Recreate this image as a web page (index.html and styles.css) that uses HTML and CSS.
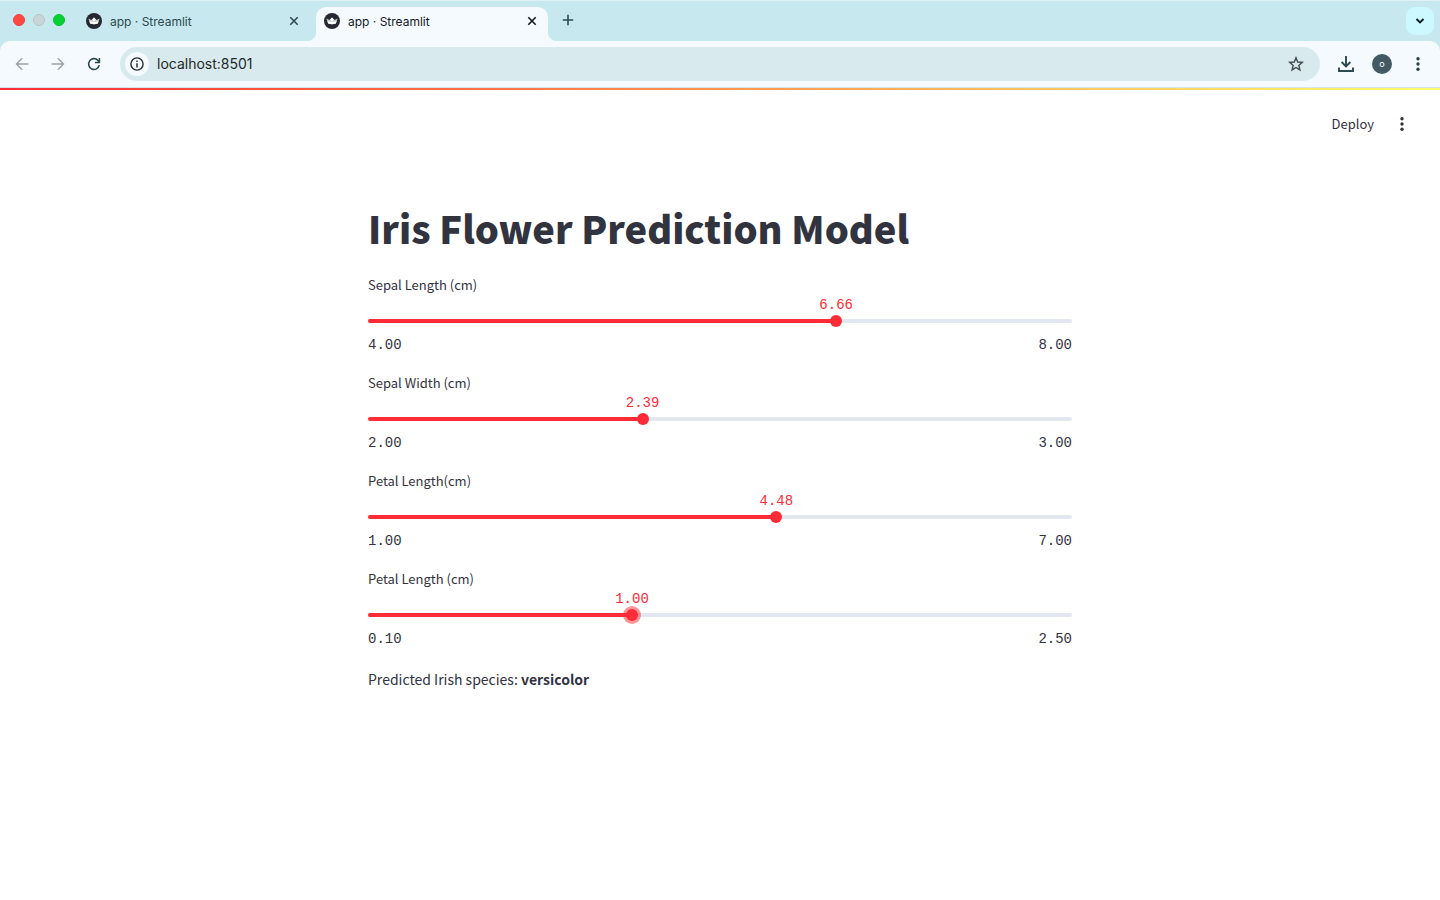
FILE: index.html
```
<!DOCTYPE html>
<html lang="en">
<head>
<meta charset="utf-8">
<title>app · Streamlit</title>
<link rel="stylesheet" href="styles.css">
</head>
<body>
<svg class="defs" aria-hidden="true">
  <symbol id="crown" viewBox="0 0 16 16"><circle cx="8" cy="8" r="8" fill="#262730"/><path d="M2.400 5.600 5.300 7.100 8 4.400l2.700 2.700 2.900-1.500-1.700 5q-3.900 1.300-7.800 0z" fill="#c9cacd"/><path d="m3.400 8.200 4.600.9 4.600-.9-.8 2.400q-3.800 1.300-7.600 0zM8 4.400l1.700 2.400L8 8.600 6.300 6.800z" fill="#fff"/></symbol>
  <symbol id="close" viewBox="0 0 10 10"><path d="m1.300 1.300 7.400 7.400m0-7.400-7.400 7.400" fill="none" stroke="currentColor" stroke-width="1.600"/></symbol>
  <symbol id="dots" viewBox="0 0 16 16"><g fill="currentColor"><circle cx="8" cy="2.800" r="1.700"/><circle cx="8" cy="8" r="1.700"/><circle cx="8" cy="13.200" r="1.700"/></g></symbol>
</svg>

<header class="browser">
  <div class="tabstrip">
    <div class="lights">
      <button class="light light-close" aria-label="Close window"></button>
      <button class="light light-min" aria-label="Minimize window"></button>
      <button class="light light-max" aria-label="Zoom window"></button>
    </div>
    <div class="tab">
      <svg class="favicon"><use href="#crown"/></svg>
      <span class="tab-title">app · Streamlit</span>
      <button class="tab-close" aria-label="Close tab"><svg width="10" height="10"><use href="#close"/></svg></button>
    </div>
    <div class="tab tab-active">
      <svg class="favicon"><use href="#crown"/></svg>
      <span class="tab-title">app · Streamlit</span>
      <button class="tab-close" aria-label="Close tab"><svg width="10" height="10"><use href="#close"/></svg></button>
    </div>
    <button class="new-tab" aria-label="New tab"><svg width="12" height="12" viewBox="0 0 12 12"><path d="M6 .8v10.400M.8 6h10.400" stroke="currentColor" stroke-width="1.600"/></svg></button>
    <button class="tab-search" aria-label="Search tabs"><svg width="10" height="8" viewBox="0 0 10 8"><path d="m1.500 2 3.500 3.500L8.500 2" fill="none" stroke="currentColor" stroke-width="1.900"/></svg></button>
  </div>

  <div class="toolbar">
    <button class="tool tool-off" aria-label="Back"><svg width="14" height="14" viewBox="0 0 14 14"><path d="M13.500 7H1.800M7.200 1.300 1.500 7l5.700 5.700" fill="none" stroke="currentColor" stroke-width="1.500"/></svg></button>
    <button class="tool tool-off" aria-label="Forward"><svg width="14" height="14" viewBox="0 0 14 14"><path d="M.5 7h11.700M6.800 1.300 12.500 7l-5.700 5.700" fill="none" stroke="currentColor" stroke-width="1.500"/></svg></button>
    <button class="tool" aria-label="Reload"><svg width="14" height="14" viewBox="0 0 14 14"><path d="M12.300 8.200A5.400 5.400 0 1 1 11 3.400L12.300 4.800" fill="none" stroke="currentColor" stroke-width="1.600"/><path d="M13.200.9v5.300H7.900V4.700h3.800V.9z" fill="currentColor"/></svg></button>
    <div class="address">
      <button class="site-info" aria-label="Site information"><svg width="14" height="14" viewBox="0 0 14 14"><circle cx="7" cy="7" r="6.100" fill="none" stroke="currentColor" stroke-width="1.400"/><path d="M7 6.200v4.200M7 3.600v1.500" stroke="currentColor" stroke-width="1.500"/></svg></button>
      <input class="url" type="text" value="localhost:8501" aria-label="Address">
      <button class="star" aria-label="Bookmark this tab"><svg width="16" height="16" viewBox="0 0 16 16"><path d="m8 1.800 1.700 4.200 4.600.4-3.500 3 1.100 4.500L8 11.500l-3.900 2.400 1.100-4.500-3.500-3 4.600-.4z" fill="none" stroke="currentColor" stroke-width="1.400"/></svg></button>
    </div>
    <button class="tool tool-download" aria-label="Downloads"><svg width="16" height="16" viewBox="0 0 16 16"><path d="M8 0v10M3.600 6 8 10.400 12.400 6M1 11.500V15h14v-3.500" fill="none" stroke="currentColor" stroke-width="1.900"/></svg></button>
    <button class="avatar" aria-label="Profile">o</button>
    <button class="tool tool-menu" aria-label="Browser menu"><svg width="16" height="16"><use href="#dots"/></svg></button>
  </div>
</header>

<div class="decoration"></div>
<div class="app-header">
  <button class="deploy">Deploy</button>
  <button class="app-menu" aria-label="Main menu"><svg width="16" height="16"><use href="#dots"/></svg></button>
</div>

<main class="content">
  <h1>Iris Flower Prediction Model</h1>
  <div class="slider" style="--p:0.665">
    <label for="s1">Sepal Length (cm)</label>
    <div class="value-row"><output for="s1">6.66</output></div>
    <div class="track"><input id="s1" type="range" min="4" max="8" step="0.01" value="6.66"></div>
    <div class="ends"><span>4.00</span><span>8.00</span></div>
  </div>
  <div class="slider" style="--p:0.39">
    <label for="s2">Sepal Width (cm)</label>
    <div class="value-row"><output for="s2">2.39</output></div>
    <div class="track"><input id="s2" type="range" min="2" max="3" step="0.01" value="2.39"></div>
    <div class="ends"><span>2.00</span><span>3.00</span></div>
  </div>
  <div class="slider" style="--p:0.58">
    <label for="s3">Petal Length(cm)</label>
    <div class="value-row"><output for="s3">4.48</output></div>
    <div class="track"><input id="s3" type="range" min="1" max="7" step="0.01" value="4.48"></div>
    <div class="ends"><span>1.00</span><span>7.00</span></div>
  </div>
  <div class="slider slider-focus" style="--p:0.375">
    <label for="s4">Petal Length (cm)</label>
    <div class="value-row"><output for="s4">1.00</output></div>
    <div class="track"><input id="s4" type="range" min="0.1" max="2.5" step="0.01" value="1"></div>
    <div class="ends"><span>0.10</span><span>2.50</span></div>
  </div>
  <p class="result">Predicted Irish species: <strong>versicolor</strong></p>
</main>
</body>
</html>
```
FILE: styles.css
```
* { box-sizing: border-box; }
body {
  margin: 0;
  background: #fff;
  color: #31333f;
  font-family: "Noto Sans CJK SC", "Open Sans", sans-serif;
}
button {
  display: flex;
  align-items: center;
  justify-content: center;
  flex: none;
  padding: 0;
  border: 0;
  background: none;
  color: inherit;
  font: inherit;
}
svg { display: block; flex: none; }
.defs { position: absolute; width: 0; height: 0; }

/* Browser window */
.browser {
  background: #c7e8ee;
  border-top: 1px solid #dff3f6;
  color: #2a4a50;
  font-family: Inter, sans-serif;
}
.tabstrip {
  display: flex;
  height: 40px;
  padding: 0 6px 0 12px;
}
.lights {
  display: flex;
  gap: 8px;
  width: 66px;
  padding: 13px 0 0 1px;
}
.light {
  width: 12px;
  height: 12px;
  border: 1px solid;
  border-radius: 50%;
}
.light-close { background-color: #fe4a42; border-color: #fb3a38; }
.light-min { background-color: #c8d6d8; border-color: #b5c5c7; }
.light-max { background-color: #06d132; border-color: #05c02b; }
.tab {
  position: relative;
  display: flex;
  align-items: center;
  width: 238px;
  height: 34px;
  margin-top: 6px;
  padding: 0 17px 6px 8px;
  font-size: 12px;
}
.tab-active {
  width: 232px;
  padding-right: 11px;
  border-radius: 10px 10px 0 0;
  background: #f5faff;
  color: #14191c;
}
/* flared feet where the active tab meets the toolbar */
.tab-active::before,
.tab-active::after {
  content: "";
  position: absolute;
  bottom: 0;
  width: 10px;
  height: 10px;
}
.tab-active::before { right: 100%; background: radial-gradient(circle at 0 0, #c7e8ee 10px, #f5faff 11px); }
.tab-active::after { left: 100%; background: radial-gradient(circle at 100% 0, #c7e8ee 10px, #f5faff 11px); }
.favicon { width: 16px; height: 16px; }
.tab-title { flex: 1; margin-left: 8px; }
.tab-close { width: 10px; height: 10px; }
.new-tab { width: 40px; height: 38px; }
.tab-search {
  width: 28px;
  height: 28px;
  margin: 6px 0 0 auto;
  border-radius: 9px;
  background: #cbf9ff;
  color: #101c1e;
}
.toolbar {
  display: flex;
  align-items: center;
  height: 47px;
  padding: 0 4px;
  border-bottom: 1px solid #d5e3ea;
  border-radius: 10px 10px 0 0;
  background: #f5faff;
}
.tool { width: 36px; height: 32px; }
.tool-off { color: #9da5a9; }
.address {
  display: flex;
  align-items: center;
  flex: 1;
  min-width: 0;
  height: 34px;
  margin-left: 8px;
  padding: 0 16px 0 5px;
  border-radius: 17px;
  background: #d8eaed;
  color: #2a2d30;
}
.site-info {
  width: 24px;
  height: 24px;
  border-radius: 50%;
  background: #f5faff;
}
.url {
  flex: 1;
  min-width: 0;
  padding: 0;
  margin-left: 8px;
  border: 0;
  background: none;
  color: #24282b;
  font: 14px/20px Inter, sans-serif;
}
.star { color: #434b4e; }
.tool-download { margin-left: 8px; }
.avatar {
  width: 20px;
  height: 20px;
  margin: 0 8px;
  border-radius: 50%;
  background: #435a65;
  color: #fff;
  font-size: 9px;
  line-height: 18px;
}
.tool-menu { color: #2a4043; }

/* Application */
.decoration { height: 2px; background: linear-gradient(90deg, #ff2b36, #fffd6b); }
.app-header {
  display: flex;
  align-items: center;
  justify-content: flex-end;
  gap: 20px;
  height: 68px;
  padding-right: 30px;
}
.deploy { font-size: 13px; line-height: 20px; }
.app-menu { width: 16px; height: 16px; }
.content {
  width: 100%;
  max-width: 704px;
  margin: 42px auto 0;
}
h1 {
  margin: 0 0 19px;
  font-size: 38px;
  line-height: 56px;
  font-weight: 900;
}
.slider {
  display: flex;
  flex-direction: column;
  margin-bottom: 18px;
}
.slider label { font-size: 13px; line-height: 20px; }
.value-row,
.ends { font: 14px/20px "Liberation Mono", monospace; }
.value-row {
  display: grid;
  justify-content: start;
  padding-left: calc(var(--p) * 100%);
  color: #ff2b36;
}
.value-row output { transform: translateX(-50%); }
.track {
  display: flex;
  align-items: center;
  height: 4px;
  margin: 4px 0;
  border-radius: 2px;
  background: linear-gradient(90deg, #ff2b36 calc(var(--p) * 100%), #e3e7ef 0);
}
/* the thumb centre travels over the full track, so the control overhangs by its radius */
.track input {
  flex: none;
  width: calc(100% + 12px);
  height: 12px;
  margin: 0 -6px;
  appearance: none;
  background: none;
  outline: 0;
}
.track input::-webkit-slider-thumb {
  appearance: none;
  width: 12px;
  height: 12px;
  border-radius: 50%;
  background: #ff2b36;
}
.slider-focus input::-webkit-slider-thumb { box-shadow: 0 0 0 3px rgba(255, 43, 54, .5); }
.ends {
  display: flex;
  justify-content: space-between;
  margin-top: 8px;
}
.result {
  margin: 0;
  font-size: 14px;
  line-height: 24px;
}
```
